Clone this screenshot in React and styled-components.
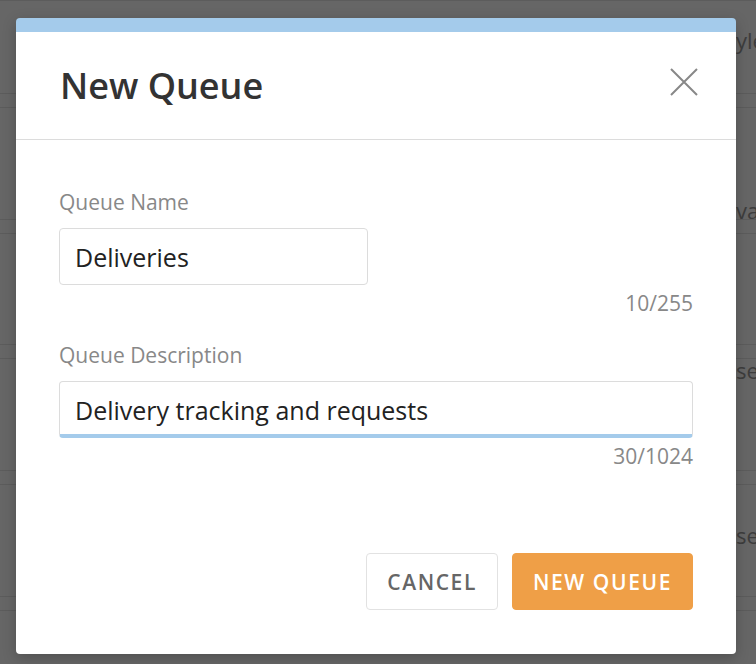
import React from 'react';
import styled, { createGlobalStyle } from 'styled-components';

const GlobalStyle = createGlobalStyle`
  html, body {
    margin: 0;
    padding: 0;
    font-family: 'Open Sans', 'Noto Sans', sans-serif;
  }
  * {
    box-sizing: border-box;
  }
`;

const Page = styled.div`
  position: relative;
  width: 756px;
  height: 664px;
  overflow: hidden;
  background: #ffffff;
  display: grid;
`;

// the page that lies behind the dialog
const BackList = styled.div`
  grid-area: 1 / 1;
  display: flex;
  flex-direction: column;
`;

const BackRow = styled.div`
  height: ${(p) => p.h}px;
  flex-shrink: 0;
  border-bottom: 1px solid #e6e6e6;
  margin-bottom: 13px;
  border-top: 1px solid #e6e6e6;
`;

const BackTexts = styled.div`
  grid-area: 1 / 1;
  display: flex;
  flex-direction: column;
  align-items: flex-end;
  font-size: 22px;
  line-height: 30px;
  color: #999;
`;

const BackText = styled.span`
  width: 20px;
  white-space: nowrap;
  overflow: hidden;
  margin-top: ${(p) => p.top}px;
`;

const Backdrop = styled.div`
  position: absolute;
  inset: 0;
  background: rgba(0, 0, 0, 0.6);
  padding: 18px 20px 10px 16px;
`;

const Modal = styled.div`
  width: 720px;
  height: 636px;
  background: #fff;
  border-radius: 4px;
  overflow: hidden;
  border-top: 14px solid #a4cbeb;
  display: flex;
  flex-direction: column;
  box-shadow: 0 4px 14px rgba(0, 0, 0, 0.22);
`;

const Header = styled.div`
  height: 108px;
  flex-shrink: 0;
  display: flex;
  align-items: center;
  justify-content: space-between;
  padding: 0 38px 0 44px;
  border-bottom: 1px solid #dcdcdc;
`;

const Title = styled.h1`
  margin: 0;
  font-size: 36px;
  font-weight: 600;
  color: #333;
  line-height: 48px;
`;

const CloseButton = styled.button`
  border: none;
  background: none;
  padding: 0;
  width: 28px;
  height: 28px;
  margin-bottom: 7px;
  cursor: pointer;
  display: flex;
`;

const Body = styled.div`
  flex: 1;
  padding: 48px 43px 0 43px;
  display: flex;
  flex-direction: column;
`;

const Field = styled.div`
  display: flex;
  flex-direction: column;
  margin-bottom: 26px;
`;

const Label = styled.label`
  font-size: 21px;
  color: #888;
  line-height: 28px;
  margin-bottom: 12px;
`;

const Input = styled.input`
  width: ${(p) => (p.short ? '309px' : '100%')};
  height: 57px;
  border: 1px solid #dcdcdc;
  border-radius: 4px;
  padding: 0 15px;
  font-family: inherit;
  font-size: 25px;
  color: #222;
  outline: none;
  background: #fff;
  ${(p) => p.focused && 'border-bottom: 4px solid #a4cbeb; padding-top: 3px;'}
`;

const Counter = styled.div`
  align-self: flex-end;
  font-size: 21px;
  color: #888;
  line-height: 24px;
  margin-top: 6px;
`;

const Footer = styled.div`
  display: flex;
  justify-content: flex-end;
  gap: 14px;
  padding: 0 43px 44px 43px;
`;

const Button = styled.button`
  height: 57px;
  padding: 0 20px;
  border-radius: 4px;
  border: 1px solid ${(p) => (p.primary ? '#ef9f47' : '#e2e2e2')};
  background: ${(p) => (p.primary ? '#ef9f47' : '#fff')};
  color: ${(p) => (p.primary ? '#fff' : '#666')};
  font-family: inherit;
  font-size: 21px;
  font-weight: 600;
  letter-spacing: 1.6px;
  text-transform: uppercase;
  cursor: pointer;
`;

const backRows = [94, 113, 112, 113, 113, 113];

const backTexts = [
  { text: 'yle', top: 25 },
  { text: 'var', top: 140 },
  { text: 'se', top: 130 },
  { text: 'se', top: 135 },
];

function App() {
  return (
    <Page>
      <GlobalStyle />
      <BackList>
        {backRows.map((h, i) => (
          <BackRow key={i} h={h} />
        ))}
      </BackList>
      <BackTexts>
        {backTexts.map((t, i) => (
          <BackText key={i} top={t.top}>
            {t.text}
          </BackText>
        ))}
      </BackTexts>
      <Backdrop>
        <Modal>
          <Header>
            <Title>New Queue</Title>
            <CloseButton aria-label="Close">
              <svg width="28" height="28" viewBox="0 0 28 28">
                <path d="M1 1L27 27M27 1L1 27" stroke="#888" strokeWidth="2" fill="none" />
              </svg>
            </CloseButton>
          </Header>
          <Body>
            <Field>
              <Label>Queue Name</Label>
              <Input short defaultValue="Deliveries" />
              <Counter>10/255</Counter>
            </Field>
            <Field>
              <Label>Queue Description</Label>
              <Input focused defaultValue="Delivery tracking and requests" />
              <Counter>30/1024</Counter>
            </Field>
          </Body>
          <Footer>
            <Button>Cancel</Button>
            <Button primary>New Queue</Button>
          </Footer>
        </Modal>
      </Backdrop>
    </Page>
  );
}

export default App;
